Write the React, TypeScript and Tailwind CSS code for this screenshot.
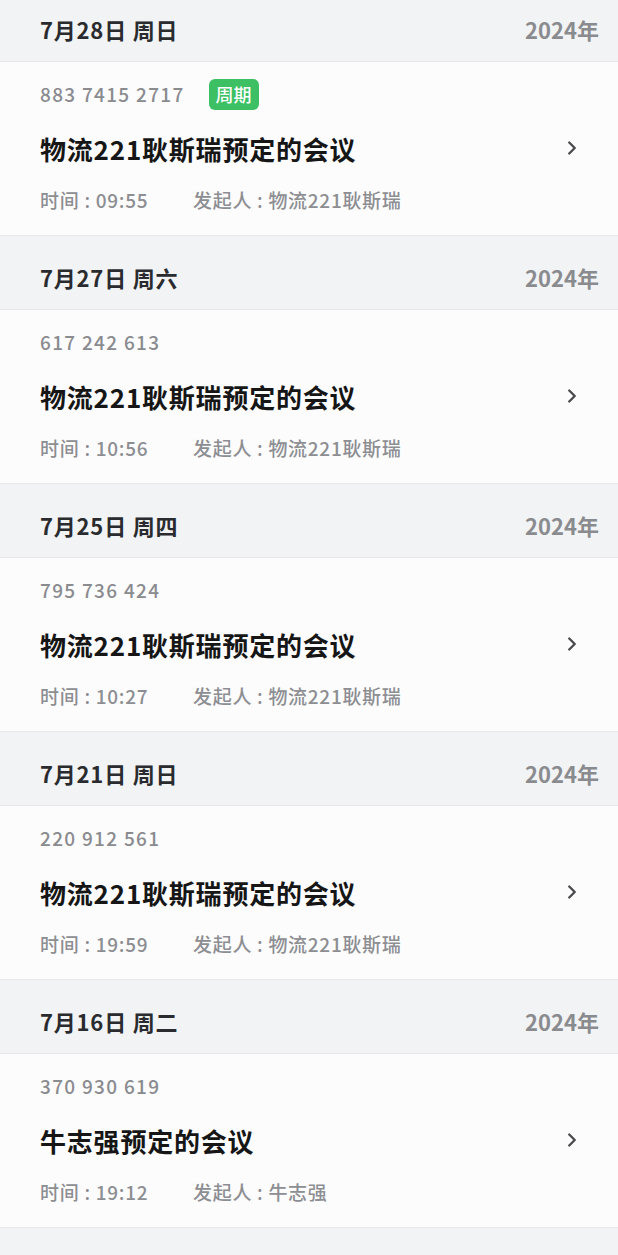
import { ChevronRight } from 'lucide-react';

type Meeting = {
  date: string;
  year: string;
  code: string;
  periodic?: boolean;
  title: string;
  time: string;
  host: string;
};

const meetings: Meeting[] = [
  { date: '7月28日 周日', year: '2024年', code: '883 7415 2717', periodic: true, title: '物流221耿斯瑞预定的会议', time: '09:55', host: '物流221耿斯瑞' },
  { date: '7月27日 周六', year: '2024年', code: '617 242 613', title: '物流221耿斯瑞预定的会议', time: '10:56', host: '物流221耿斯瑞' },
  { date: '7月25日 周四', year: '2024年', code: '795 736 424', title: '物流221耿斯瑞预定的会议', time: '10:27', host: '物流221耿斯瑞' },
  { date: '7月21日 周日', year: '2024年', code: '220 912 561', title: '物流221耿斯瑞预定的会议', time: '19:59', host: '物流221耿斯瑞' },
  { date: '7月16日 周二', year: '2024年', code: '370 930 619', title: '牛志强预定的会议', time: '19:12', host: '牛志强' },
];

function MeetingCard({ m }: { m: Meeting }) {
  return (
    <div className="h-[174px] bg-[#fcfcfd] border-b border-[#e6e7ea] pl-[40px] pr-[40px] flex items-start">
      <div className="flex-1">
        <div className="h-[32px] mt-[16px] flex items-center gap-[24px]">
          <span className="text-[19px] font-medium text-[#8a8b8f] tracking-[1.3px]">{m.code}</span>
          {m.periodic && (
            <span className="h-[31px] px-[7px] rounded-[6px] bg-[#3dbf63] text-white text-[18px] font-medium flex items-center">
              周期
            </span>
          )}
        </div>
        <div className="mt-[22px] h-[32px] flex items-center text-[26px] font-bold text-[#161616] tracking-[0.8px]">
          {m.title}
        </div>
        <div className="mt-[22px] h-[28px] flex items-center text-[19px] font-medium text-[#8d8e92] tracking-[0.7px]">
          <span className="w-[153px]">时间 : {m.time}</span>
          <span>发起人 : {m.host}</span>
        </div>
      </div>
      <ChevronRight className="mt-[75px] w-[22px] h-[22px] text-[#4a4a4d] -mr-[5px]" strokeWidth={2.6} />
    </div>
  );
}

export default function App() {
  return (
    <div
      className="w-[618px] h-[1255px] overflow-hidden bg-[#f2f3f5]"
      style={{ fontFamily: '"Noto Sans CJK SC", "Noto Sans", sans-serif' }}
    >
      <div className="-mt-[12px]">
        {meetings.map((m) => (
          <section key={m.date + m.code}>
            <div className="h-[74px] pt-[10px] px-[40px] flex items-center justify-between bg-[#f2f3f5] border-b border-[#e6e7ea]">
              <span className="text-[22px] font-bold text-[#2a2b2e] tracking-[0.8px]">{m.date}</span>
              <span className="text-[22px] font-bold text-[#8a8b8f] mr-[-21px]">{m.year}</span>
            </div>
            <MeetingCard m={m} />
          </section>
        ))}
      </div>
    </div>
  );
}
